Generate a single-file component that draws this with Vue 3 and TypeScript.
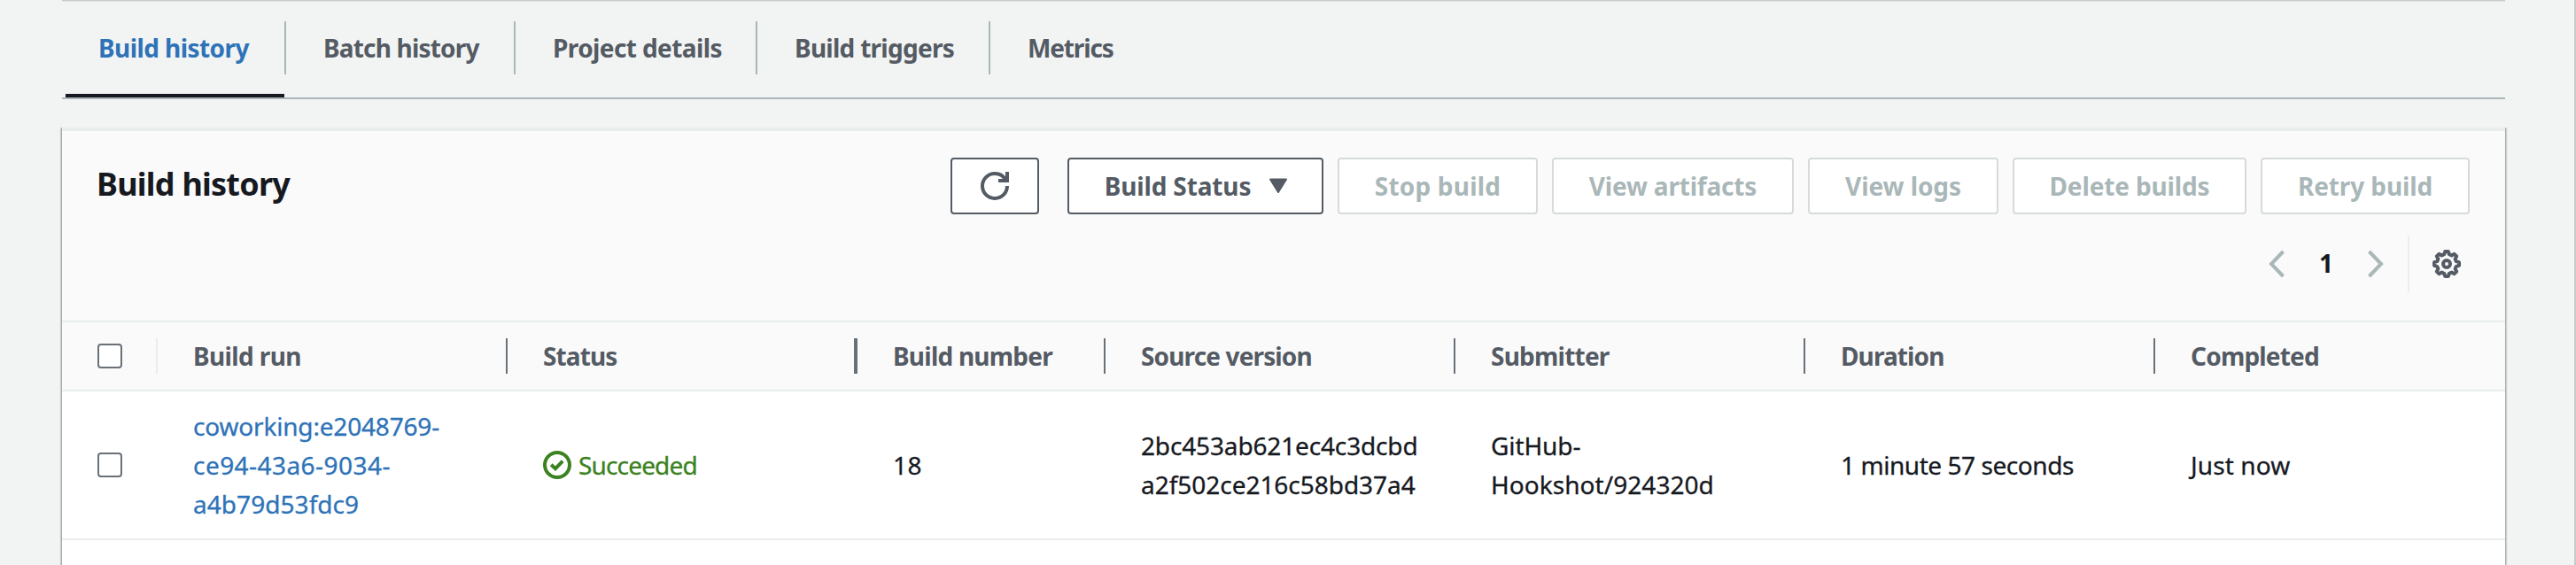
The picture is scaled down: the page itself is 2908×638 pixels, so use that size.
<script setup lang="ts">
interface Label {
  text: string
  /** letter spacing in px */
  track: number
}
interface ActionButton extends Label {
  width: number
}
interface Cell {
  kind: 'link' | 'status' | 'text'
  lines: Label[]
}

const tabs: (Label & { width: number })[] = [
  { text: 'Build history', track: -0.57, width: 249 },
  { text: 'Batch history', track: -0.82, width: 259 },
  { text: 'Project details', track: -0.6, width: 273 },
  { text: 'Build triggers', track: -0.73, width: 263 },
  { text: 'Metrics', track: -1.15, width: 180 },
]

const actions: ActionButton[] = [
  { text: 'Stop build', track: 0.2, width: 226 },
  { text: 'View artifacts', track: -0.2, width: 273 },
  { text: 'View logs', track: -0.08, width: 215 },
  { text: 'Delete builds', track: -0.14, width: 264 },
  { text: 'Retry build', track: -0.1, width: 236 },
]

const columns: Label[] = [
  { text: 'Build run', track: -0.62 },
  { text: 'Status', track: -0.9 },
  { text: 'Build number', track: -0.77 },
  { text: 'Source version', track: -0.86 },
  { text: 'Submitter', track: -0.77 },
  { text: 'Duration', track: -0.9 },
  { text: 'Completed', track: -0.8 },
]

const cells: Cell[] = [
  {
    kind: 'link',
    lines: [
      { text: 'coworking:e2048769-', track: -0.18 },
      { text: 'ce94-43a6-9034-', track: 0.45 },
      { text: 'a4b79d53fdc9', track: 0.05 },
    ],
  },
  { kind: 'status', lines: [{ text: 'Succeeded', track: -0.84 }] },
  { kind: 'text', lines: [{ text: '18', track: 0.5 }] },
  {
    kind: 'text',
    lines: [
      { text: '2bc453ab621ec4c3dcbd', track: -0.15 },
      { text: 'a2f502ce216c58bd37a4', track: -0.03 },
    ],
  },
  {
    kind: 'text',
    lines: [
      { text: 'GitHub-', track: -0.1 },
      { text: 'Hookshot/924320d', track: 0.05 },
    ],
  },
  { kind: 'text', lines: [{ text: '1 minute 57 seconds', track: -0.44 }] },
  { kind: 'text', lines: [{ text: 'Just now', track: 0.1 }] },
]

const spacing = (l: Label) => ({ letterSpacing: `${l.track}px` })
</script>

<template>
  <div class="page">
    <main class="content">
      <nav class="tabs">
        <a
          v-for="(tab, i) in tabs"
          :key="tab.text"
          class="tab"
          :class="{ active: i === 0 }"
          :style="{ width: `${tab.width}px` }"
        >
          <span class="tab-label" :style="spacing(tab)">{{ tab.text }}</span>
          <span v-if="i === 0" class="tab-marker"></span>
        </a>
      </nav>

      <section class="card">
        <header class="card-head">
          <div class="toolbar">
            <h2>Build history</h2>
            <div class="actions">
              <button class="btn refresh" aria-label="Refresh">
                <svg width="32" height="32" viewBox="0 0 16 16" fill="none" stroke="currentColor" stroke-width="2">
                  <path d="M10 5h5V0" />
                  <path d="M15 8a6.96 6.96 0 0 1-7 7 6.96 6.96 0 0 1-7-7 6.96 6.96 0 0 1 7-7 6.87 6.87 0 0 1 6.3 4" />
                </svg>
              </button>
              <button class="btn dropdown">
                <span>Build Status</span>
                <svg width="22" height="18" viewBox="0 0 22 18">
                  <path d="M2 1.5h18L11 16z" fill="currentColor" stroke="currentColor" stroke-width="2" stroke-linejoin="round" />
                </svg>
              </button>
              <button
                v-for="a in actions"
                :key="a.text"
                class="btn"
                disabled
                :style="{ width: `${a.width}px`, letterSpacing: `${a.track}px` }"
              >{{ a.text }}</button>
            </div>
          </div>
          <div class="pager">
            <svg class="arrow" width="20" height="32" viewBox="0 0 20 32" fill="none" stroke="currentColor" stroke-width="4">
              <path d="M17.5 2 4 16l13.500 14" />
            </svg>
            <span class="page-number">1</span>
            <svg class="arrow" width="20" height="32" viewBox="0 0 20 32" fill="none" stroke="currentColor" stroke-width="4">
              <path d="M2.500 2 16 16 2.500 30" />
            </svg>
            <span class="pager-rule"></span>
            <svg class="gear" width="32" height="32" viewBox="0 0 16 16" fill="none" stroke="currentColor" stroke-width="2" stroke-linejoin="round">
              <path d="M15 8.9V7.1L13.4 6.6 12.8 5.2 13.6 3.7 12.3 2.4 10.8 3.2 9.4 2.6 8.9 1H7.1L6.6 2.6 5.2 3.2 3.7 2.4 2.4 3.7 3.2 5.2 2.6 6.6 1 7.1V8.9L2.6 9.4 3.2 10.8 2.4 12.3 3.7 13.6 5.2 12.8 6.6 13.4 7.1 15H8.9L9.4 13.4 10.8 12.8 12.3 13.6 13.6 12.3 12.8 10.8 13.4 9.4z" />
              <circle cx="8" cy="8" r="2" />
            </svg>
          </div>
        </header>

        <div class="row head-row">
          <div class="check-cell"><span class="checkbox"></span></div>
          <div v-for="c in columns" :key="c.text" class="head-cell">
            <span :style="spacing(c)">{{ c.text }}</span>
          </div>
        </div>

        <div class="row body-row">
          <div class="check-cell"><span class="checkbox"></span></div>
          <div v-for="(cell, i) in cells" :key="i" class="cell" :class="cell.kind">
            <svg v-if="cell.kind === 'status'" class="ok" width="32" height="32" viewBox="0 0 16 16" fill="none" stroke="currentColor" stroke-width="2">
              <circle cx="8" cy="8" r="7" />
              <path d="M4.6 7.9 7 10.1 11.1 5.8" />
            </svg>
            <div class="lines">
              <span v-for="l in cell.lines" :key="l.text" :style="spacing(l)">{{ l.text }}</span>
            </div>
          </div>
        </div>
      </section>
    </main>
  </div>
</template>

<style>
body {
  background: #f2f4f3;
}
</style>

<style scoped>
.page {
  box-sizing: border-box;
  width: 2908px;
  height: 638px;
  overflow: hidden;
  padding: 0 78px 0 70px;
  border-right: 2px solid #c6caca;
  background: #f2f4f3;
  color: #16191f;
  font-family: "Noto Sans", "Open Sans", sans-serif;
  font-size: 28px;
  line-height: 44px;
}

.content {
  width: 2758px;
  border-top: 1px solid #c9cccc;
  box-shadow: inset 0 1px 0 #e0e3e3;
}

.tabs {
  display: flex;
  box-sizing: border-box;
  height: 111px;
  padding: 0 0 0 4px;
  border-bottom: 2px solid #aab7b8;
}

.tab {
  display: flex;
  flex-direction: column;
  justify-content: space-between;
  color: #545b64;
  font-weight: 700;
}

.tab.active {
  color: #2e73b8;
}

.tab-label {
  box-sizing: border-box;
  height: 60px;
  margin-top: 23px;
  padding: 8px 0 0 42px;
  border-right: 2px solid #aab7b8;
  white-space: nowrap;
}

.tab.active .tab-label {
  padding-left: 37px;
}

.tab-marker {
  width: 247px;
  height: 4px;
  background: #16191f;
}

.tab:last-child .tab-label {
  border-right: 0;
}

.card {
  height: 494px;
  margin-top: 32px;
  background: #fff;
  box-shadow: 0 1px 2px 1px #7f8a8c;
  clip-path: inset(0 -4px);
}

.card-head {
  box-sizing: border-box;
  height: 218px;
  padding: 30px 40px 0;
  border-top: 4px solid #eaeded;
  background: #fafafa;
}

.toolbar {
  display: flex;
  justify-content: space-between;
  height: 64px;
}

h2 {
  margin: 7px 0 0 -1px;
  font-size: 36px;
  line-height: 46px;
  font-weight: 700;
  letter-spacing: -0.76px;
}

.actions {
  display: flex;
  gap: 16px;
}

.btn {
  display: flex;
  align-items: center;
  justify-content: center;
  box-sizing: border-box;
  height: 64px;
  padding: 0 0 1px;
  border: 2px solid #545b64;
  border-radius: 4px;
  background: #fff;
  color: #545b64;
  font: 700 28px/44px "Noto Sans", "Open Sans", sans-serif;
  white-space: nowrap;
}

.btn:disabled {
  border-color: #d5dbdb;
  color: #aab7b8;
}

.refresh {
  width: 100px;
  margin-right: 16px;
  padding: 0;
}

.dropdown {
  width: 289px;
  gap: 20px;
  padding-left: 2px;
  letter-spacing: -0.13px;
}

.pager {
  display: flex;
  align-items: center;
  justify-content: flex-end;
  height: 64px;
  margin-top: 24px;
  padding-right: 10px;
}

.arrow {
  color: #aab7b8;
}

.page-number {
  width: 92px;
  padding-bottom: 2px;
  text-align: center;
  font-weight: 700;
}

.pager-rule {
  width: 2px;
  height: 64px;
  margin: 0 26px;
  background: #eaeded;
}

.gear {
  color: #545b64;
}

.row {
  display: grid;
  grid-template-columns: 108px 395px 395px 280px 395px 395px 395px 395px;
  align-items: center;
  box-sizing: border-box;
}

.head-row {
  height: 80px;
  border-top: 2px solid #eaeded;
  border-bottom: 2px solid #eaeded;
  background: #fafafa;
  color: #545b64;
  font-weight: 700;
}

.body-row {
  height: 168px;
  border-bottom: 2px solid #eaeded;
}

.check-cell {
  display: flex;
  align-items: center;
  box-sizing: border-box;
  height: 40px;
  padding-left: 40px;
}

.head-row .check-cell {
  border-right: 2px solid #eaeded;
}

.checkbox {
  box-sizing: border-box;
  width: 28px;
  height: 28px;
  border: 2px solid #687078;
  border-radius: 4px;
  background: #fff;
}

.head-cell {
  display: flex;
  align-items: center;
  box-sizing: border-box;
  height: 40px;
  padding: 0 0 1px 40px;
  border-right: 2px solid #687078;
}

.head-cell:nth-child(3) {
  border-right-width: 4px;
}

.head-cell:last-child {
  border-right: 0;
}

.cell {
  display: flex;
  align-items: center;
  padding-left: 40px;
}

.lines {
  display: flex;
  flex-direction: column;
  white-space: nowrap;
  -webkit-text-stroke: 0.3px currentColor;
}

.link {
  color: #2e73b8;
}

.status {
  gap: 8px;
  color: #3b8220;
}
</style>
